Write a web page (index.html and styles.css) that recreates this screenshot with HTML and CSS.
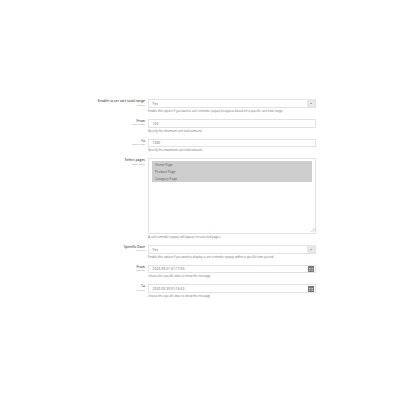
FILE: index.html
```html
<!DOCTYPE html>
<html lang="en">
<head>
<meta charset="UTF-8">
<meta name="viewport" content="width=device-width, initial-scale=1.0">
<title>Cart reminder settings</title>
<link rel="stylesheet" href="styles.css">
</head>
<body>

<div class="form">
    <div class="row">
        <div class="label"><b>Enable to set cart total range</b><span>[global]</span></div>
        <div class="value">
            <div class="field select"><span>Yes</span><i class="arrow"></i></div>
            <p class="note">Enable this option if you want a cart reminder popup to appear based on a specific cart total range.</p>
        </div>
    </div>
    <div class="row">
        <div class="label"><b>From</b><span>[store view]</span></div>
        <div class="value">
            <div class="field"><span>100</span></div>
            <p class="note">Specify the minimum cart total amount.</p>
        </div>
    </div>
    <div class="row">
        <div class="label"><b>To</b><span>[store view]</span></div>
        <div class="value">
            <div class="field"><span>1000</span></div>
            <p class="note">Specify the maximum cart total amount.</p>
        </div>
    </div>
    <div class="row">
        <div class="label"><b>Select pages</b><span>[store view]</span></div>
        <div class="value">
            <div class="listbox">
                <div class="option">Home Page</div>
                <div class="option">Product Page</div>
                <div class="option">Category Page</div>
                <svg class="grip" width="4" height="4" viewBox="0 0 4 4"><path d="M0 4L4 0M2 4L4 2" stroke="#aaa" stroke-width="0.5"/></svg>
            </div>
            <p class="note">A cart reminder popup will appear on selected pages.</p>
        </div>
    </div>
    <div class="row">
        <div class="label"><b>Specific Date</b><span>[global]</span></div>
        <div class="value">
            <div class="field select"><span>Yes</span><i class="arrow"></i></div>
            <p class="note">Enable this option if you want to display a cart reminder popup within a specific time period.</p>
        </div>
    </div>
    <div class="row">
        <div class="label"><b>From</b><span>[global]</span></div>
        <div class="value">
            <div class="field date"><span>2022-09-01 01:17:03</span>
                <svg class="cal" width="6" height="6" viewBox="0 0 6 6"><path d="M0 0H6V6H0Z" fill="#7a7672"/><path d="M1 2H2V3H1ZM2.5 2H3.5V3H2.5ZM4 2H5V3H4ZM1 3.7H2V4.7H1ZM2.5 3.7H3.5V4.7H2.5ZM4 3.7H5V4.7H4Z" fill="#cfcdcb"/></svg>
            </div>
            <p class="note">choose the specific date to show the message</p>
        </div>
    </div>
    <div class="row">
        <div class="label"><b>To</b><span>[global]</span></div>
        <div class="value">
            <div class="field date"><span>2022-09-30 01:16:53</span>
                <svg class="cal" width="6" height="6" viewBox="0 0 6 6"><path d="M0 0H6V6H0Z" fill="#7a7672"/><path d="M1 2H2V3H1ZM2.5 2H3.5V3H2.5ZM4 2H5V3H4ZM1 3.7H2V4.7H1ZM2.5 3.7H3.5V4.7H2.5ZM4 3.7H5V4.7H4Z" fill="#cfcdcb"/></svg>
            </div>
            <p class="note">choose the specific date to show the message</p>
        </div>
    </div>
</div>

</body>
</html>
```
FILE: styles.css
```css
body {
    margin: 0;
    background: #ffffff;
    font-family: "Open Sans", "Liberation Sans", sans-serif;
    color: #41362f;
}
.form {
    display: flex;
    flex-direction: column;
    gap: 5px;
    padding: 99px 84px 0 81px;
}
.row {
    display: flex;
    gap: 3px;
}
.label {
    width: 64px;
    flex-shrink: 0;
    text-align: right;
    white-space: nowrap;
}
.label b {
    display: block;
    font-size: 3.4px;
    line-height: 4.5px;
    font-weight: 600;
    color: #5a514b;
}
.label span {
    display: block;
    font-size: 2.4px;
    line-height: 2.5px;
    color: #959595;
}
.value {
    flex: 1;
}
.field {
    height: 8.75px;
    box-sizing: border-box;
    border: 0.5px solid #e2e2e2;
    display: flex;
    align-items: center;
    justify-content: space-between;
    padding-left: 3.5px;
    font-size: 3.4px;
    color: #666666;
}
.arrow {
    width: 8px;
    height: 8px;
    background: #e8e8e8;
    position: relative;
}
.arrow::after {
    content: "";
    position: absolute;
    left: 3px;
    top: 3.5px;
    border: 1.1px solid transparent;
    border-top: 1.3px solid #777777;
}
.date {
    padding-right: 1.5px;
}
.note {
    margin: 0;
    padding-top: 1px;
    font-size: 2.95px;
    line-height: 5px;
    color: #6e6e6e;
}
.listbox {
    height: 75.5px;
    box-sizing: border-box;
    border: 0.5px solid #e2e2e2;
    padding: 1.5px 3px;
    position: relative;
}
.option {
    height: 7px;
    line-height: 7px;
    background: #cdcdcd;
    padding-left: 3px;
    font-size: 3.3px;
    color: #555555;
}
.grip {
    position: absolute;
    right: 0.5px;
    bottom: 0.5px;
}
```
